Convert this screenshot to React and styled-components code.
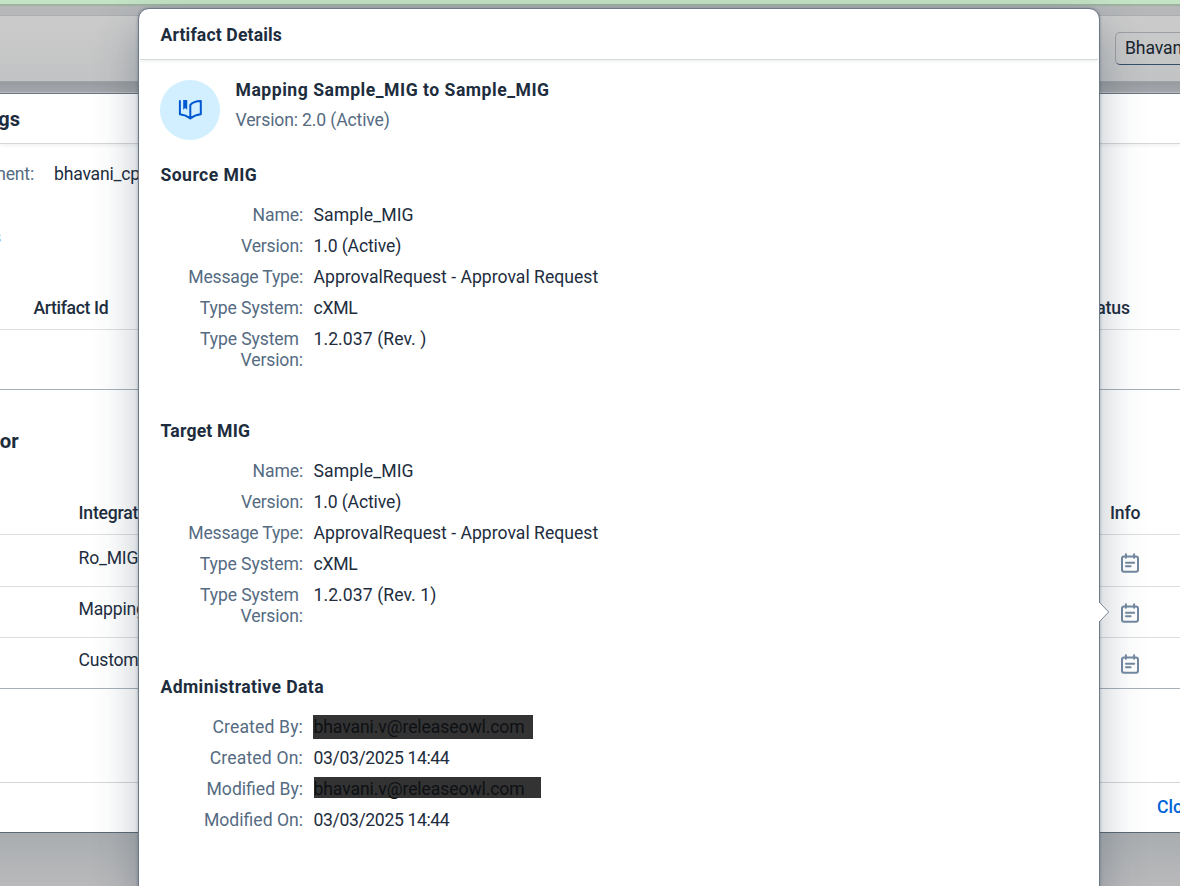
import React from "react";
import styled, { createGlobalStyle } from "styled-components";

const Global = createGlobalStyle`
  * { box-sizing: border-box; }
  html, body { margin: 0; padding: 0; overflow: hidden; }
  body { font-family: Roboto, "Liberation Sans", sans-serif; font-size: 17.6px; line-height: 21px; color: #1d2d3e; }
`;

const Page = styled.div`
  position: relative;
  width: 1180px;
  height: 886px;
  overflow: hidden;
  display: flex;
  flex-direction: column;
  background: linear-gradient(#a9adb0, #b9b9bb) bottom / 100% 54px no-repeat #b0b3b6;
`;
const TopStrip = styled.div`
  flex: none;
  height: 6px;
  background: #c5e3c5;
  border-bottom: 2px solid #a0b2a2;
`;
const Gap = styled.div`
  flex: none;
  height: 9px;
  background: #b5b7b9;
`;
const Shell = styled.div`
  flex: none;
  height: 67px;
  display: flex;
  justify-content: flex-end;
  padding-top: 16px;
  border-top: 1px solid #acaeb0;
  border-bottom: 1px solid #a0a3a6;
  background: linear-gradient(#cbcbcb, #c2c3c4);
`;
const UserSelect = styled.div`
  width: 65px;
  height: 33px;
  padding: 5px 0 0 9px;
  border: 1px solid #9b9fa5;
  border-right: 0;
  border-bottom: 1px solid #36506b;
  border-radius: 5px 0 0 5px;
  white-space: nowrap;
  overflow: hidden;
  letter-spacing: -0.1px;
  color: #18232f;
`;
const Band = styled.div`
  flex: none;
  height: 11px;
  background: linear-gradient(#989ca1, #a2a5a9);
  border-bottom: 1px solid #b9bbbd;
`;
const Dialog = styled.div`
  flex: none;
  height: 740px;
  display: flex;
  flex-direction: column;
  background: #fff;
  border-top: 1px solid #6a7581;
  border-bottom: 1px solid #5b6875;
`;
const DialogHeader = styled.div`
  height: 50px;
  flex: none;
  display: flex;
  align-items: center;
  border-bottom: 1px solid #d4d6d8;
  box-shadow: 0 2px 3px rgba(34, 53, 72, 0.06);
`;
const Clipped = styled.div`
  flex: none;
  width: ${(p) => p.$w}px;
  display: flex;
  justify-content: flex-end;
  overflow: hidden;
  white-space: nowrap;
  color: ${(p) => p.$color || "#1d2d3e"};
  font-size: ${(p) => p.$size || 17.6}px;
  font-weight: ${(p) => (p.$bold ? 700 : 400)};
  letter-spacing: ${(p) => p.$ls ?? -0.2}px;
  line-height: 26px;
`;
const Line = styled.div`
  flex: none;
  height: ${(p) => p.$h}px;
  display: flex;
  align-items: center;
  justify-content: space-between;
  padding-top: ${(p) => p.$drop || 0}px;
  border-bottom: ${(p) => (p.$rule ? `1px solid ${p.$rule}` : "0")};
`;
const LeftCell = styled.div`
  padding-left: ${(p) => p.$pad}px;
  padding-bottom: ${(p) => p.$lift || 0}px;
  letter-spacing: ${(p) => p.$ls ?? -0.2}px;
  font-weight: ${(p) => (p.$head ? 500 : 400)};
`;
const RightCell = styled.div`
  width: ${(p) => p.$w}px;
  display: flex;
  font-weight: 500;
  white-space: nowrap;
  letter-spacing: -0.15px;
  padding-top: ${(p) => p.$drop || 0}px;
`;
const DialogFooter = styled.div`
  flex: 1;
  display: flex;
  justify-content: flex-end;
  align-items: center;
  overflow: hidden;
`;
const CloseButton = styled.div`
  width: 23px;
  color: #0064d9;
  font-weight: 500;
  white-space: nowrap;
`;

const Popover = styled.section`
  position: absolute;
  left: 138px;
  top: 8px;
  width: 962px;
  height: 900px;
  background: #fff;
  border: 1px solid #6d7a88;
  border-radius: 11px;
  box-shadow: 0 0 3px rgba(34, 53, 72, 0.35), 0 16px 44px rgba(34, 53, 72, 0.3);
`;
const Arrow = styled.svg`
  position: absolute;
  right: -11px;
  top: 592px;
`;
const PopoverHeader = styled.header`
  height: 51px;
  margin: 0 1px;
  padding: 16px 20.5px 0;
  border-bottom: 1px solid #d5d8da;
  box-shadow: 0 2px 3px rgba(34, 53, 72, 0.06);
  font-weight: 700;
  letter-spacing: 0.15px;
`;
const PopoverBody = styled.div`
  padding: 20px 21px 0;
`;
const Summary = styled.div`
  display: flex;
  gap: 15.5px;
  height: 60px;
`;
const Avatar = styled.div`
  width: 60px;
  height: 60px;
  border-radius: 50%;
  background: #d1efff;
  display: flex;
  align-items: center;
  justify-content: center;
`;
const SummaryTitle = styled.div`
  font-weight: 700;
  letter-spacing: 0.51px;
`;
const SummarySub = styled.div`
  margin-top: 9px;
  color: #556b82;
  letter-spacing: -0.14px;
`;
const Section = styled.section`
  padding-top: ${(p) => p.$top}px;
`;
const SectionTitle = styled.h2`
  margin: 0 0 14px 0.5px;
  font-size: inherit;
  line-height: 21px;
  font-weight: 700;
  letter-spacing: ${(p) => p.$ls}px;
`;
const Field = styled.div`
  display: flex;
  gap: 10.5px;
  padding: 5px 0;
`;
const Label = styled.div`
  width: 143px;
  text-align: right;
  color: #556b82;
  letter-spacing: ${(p) => p.$ls || 0}px;
`;
const Value = styled.div`
  letter-spacing: ${(p) => p.$ls || 0}px;
`;
const Redacted = styled(Value)`
  position: relative;
  z-index: 0;
  color: #0d1014;
  &::before {
    content: "";
    position: absolute;
    z-index: -1;
    left: ${(p) => p.$x}px;
    top: ${(p) => p.$y}px;
    width: ${(p) => p.$bw}px;
    height: ${(p) => p.$bh}px;
    background: #333;
  }
`;

const InfoIcon = () => (
  <svg width="20" height="22" viewBox="0 0 20 22" fill="none" stroke="#7389a1" strokeWidth="2" strokeLinecap="round">
    <rect x="2" y="4.4" width="16" height="15.4" rx="2" />
    <path d="M5.9 2.2v3.6M14.1 2.2v3.6M6 10.8h8.2M6 14.2h4.6" />
  </svg>
);

const BookIcon = () => (
  <svg width="24" height="22" viewBox="0 0 24 22" fill="none" stroke="#0057d2" strokeWidth="2" strokeLinejoin="round" strokeLinecap="round">
    <path d="M1.9 2.1V15.3C5.5 15.7 9.2 17 12.3 19.4C15.4 17 19.2 15.7 22.8 15.3V2.1C18.5 2.2 14.5 3.3 12.3 6V19" />
    <path d="M5.2 1.1H9.2V10.8L7.2 8.9L5.2 10.8Z" fill="#0057d2" stroke="none" />
  </svg>
);

const mig = (rev) => [
  ["Name:", "Sample_MIG", -0.15, 0.12],
  ["Version:", "1.0 (Active)", -0.2, -0.14],
  ["Message Type:", "ApprovalRequest - Approval Request", -0.2, 0.01],
  ["Type System:", "cXML", -0.1, -0.3],
  [<>Type System&nbsp;<br />Version:</>, `1.2.037 (Rev. ${rev})`, -0.13, 0.07],
];

const Details = ({ title, top, ls, rows }) => (
  <Section $top={top}>
    <SectionTitle $ls={ls}>{title}</SectionTitle>
    {rows.map(([label, value, labelLs, valueLs], i) => (
      <Field key={i}>
        <Label $ls={labelLs}>{label}</Label>
        <Value $ls={valueLs}>{value}</Value>
      </Field>
    ))}
  </Section>
);

const integrations = [
  ["Ro_MIG", 52, 4, 4],
  ["Mapping", 51, 6, 2],
  ["Custom", 51, 6, 2],
];

export default function App() {
  return (
    <Page>
      <Global />
      <TopStrip />
      <Gap />
      <Shell>
        <UserSelect>Bhavani</UserSelect>
      </Shell>
      <Band />
      <Dialog>
        <DialogHeader>
          <Clipped $w={20} $size={20} $ls={0} $bold>Settings</Clipped>
        </DialogHeader>
        <Line $h={60}>
          <Clipped $w={34} $color="#556b82">Environment:</Clipped>
          <LeftCell $pad={20} style={{ flex: 1 }}>bhavani_cpi</LeftCell>
        </Line>
        <Line $h={66}>
          <Clipped $w={1}>Artifacts</Clipped>
        </Line>
        <Line $h={60} $drop={17} $rule="#dcdee0">
          <LeftCell $pad={33.5} $ls={-0.35} $head>Artifact Id</LeftCell>
          <RightCell $w={100}>Status</RightCell>
        </Line>
        <Line $h={60} $rule="#a5b0bb" />
        <Line $h={102}>
          <Clipped $w={19} $size={20.3} $ls={0.2} $bold>Editor</Clipped>
        </Line>
        <Line $h={43} $rule="#dcdee0">
          <LeftCell $pad={78.5} $head>Integration</LeftCell>
          <RightCell $w={70}>Info</RightCell>
        </Line>
        {integrations.map(([name, h, lift, drop], i) => (
          <Line key={name} $h={h} $rule={i === 2 ? "#a5b0bb" : "#dcdee0"}>
            <LeftCell $pad={78.5} $lift={lift}>{name}</LeftCell>
            <RightCell $w={60} $drop={drop}><InfoIcon /></RightCell>
          </Line>
        ))}
        <Line $h={94} $rule="#d4d6d8" />
        <DialogFooter>
          <CloseButton>Close</CloseButton>
        </DialogFooter>
      </Dialog>

      <Popover>
        <Arrow width="12" height="22" viewBox="0 0 12 22">
          <path d="M0 0.5L1 1L10.7 11L1 21L0 21.5Z" fill="#fff" />
          <path d="M1 1L10.7 11L1 21" fill="none" stroke="#7c8894" strokeWidth="1" />
        </Arrow>
        <PopoverHeader>Artifact Details</PopoverHeader>
        <PopoverBody>
          <Summary>
            <Avatar><BookIcon /></Avatar>
            <div>
              <SummaryTitle>Mapping Sample_MIG to Sample_MIG</SummaryTitle>
              <SummarySub>Version: 2.0 (Active)</SummarySub>
            </div>
          </Summary>
          <Details title="Source MIG" top={25} ls={0.42} rows={mig("")} />
          <Details title="Target MIG" top={45} ls={0.2} rows={mig("1")} />
          <Section $top={45}>
            <SectionTitle $ls={0.38}>Administrative Data</SectionTitle>
            <Field>
              <Label $ls={0.14}>Created By:</Label>
              <Redacted $ls={-0.1} $x={-1} $y={-2} $bw={220} $bh={24}>bhavani.v@releaseowl.com</Redacted>
            </Field>
            <Field>
              <Label $ls={0.16}>Created On:</Label>
              <Value $ls={-0.37}>03/03/2025 14:44</Value>
            </Field>
            <Field>
              <Label>Modified By:</Label>
              <Redacted $ls={-0.1} $x={0.5} $y={-2} $bw={227} $bh={21}>bhavani.v@releaseowl.com</Redacted>
            </Field>
            <Field>
              <Label>Modified On:</Label>
              <Value $ls={-0.37}>03/03/2025 14:44</Value>
            </Field>
          </Section>
        </PopoverBody>
      </Popover>
    </Page>
  );
}
